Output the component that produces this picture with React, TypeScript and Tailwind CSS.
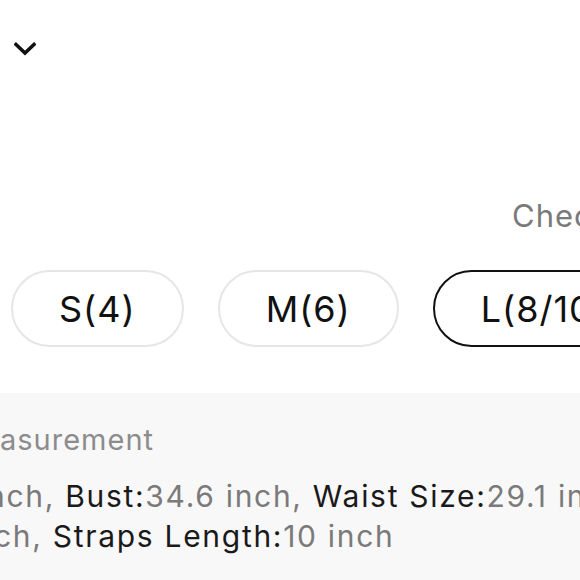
import React from 'react';

const sizes = [
  { label: 'S(4)', active: false },
  { label: 'M(6)', active: false },
  { label: 'L(8/10)', active: true },
];

export default function App() {
  return (
    <div
      className="w-[580px] h-[580px] overflow-hidden bg-white flex flex-col"
      style={{ fontFamily: 'Inter, "Noto Sans", sans-serif' }}
    >
      {/* collapse toggle */}
      <div className="pt-[42px] pl-[14px] h-[170px]">
        <svg width="22" height="14" viewBox="0 0 22 14" fill="none">
          <path d="M2 2.5 L11 11 L20 2.5" stroke="#111" strokeWidth="3.6" strokeLinecap="square" />
        </svg>
      </div>

      {/* size chart link */}
      <div className="flex pl-[512px] h-[100px] pt-[30px]">
        <span className="text-[31px] leading-none tracking-[1px] text-[#7a7a7a] whitespace-nowrap">Check Size Chart</span>
      </div>

      {/* size options */}
      <div className="flex gap-[34px] pl-[11px] h-[123px]">
        {sizes.map((s) => (
          <div
            key={s.label}
            className={`shrink-0 px-[46px] h-[77px] rounded-full flex items-center justify-center text-[36px] tracking-[1px] text-[#111] border-2 whitespace-nowrap ${
              s.active ? 'border-[#111]' : 'border-[#e6e6e6]'
            }`}
          >
            {s.label}
          </div>
        ))}
      </div>

      {/* measurement panel */}
      <div className="flex-1 bg-[#f8f8f8] pt-[32px] whitespace-nowrap">
        <div className="text-[29px] leading-none tracking-[1px] text-[#8c8c8c]">asurement</div>
        <div className="mt-[22px] text-[30px] leading-[40px] tracking-[1.7px] text-[#7a7a7a]">
          <div className="-ml-[13px]">
            nch, <span className="text-[#1a1a1a]">Bust:</span>34.6 inch, <span className="text-[#1a1a1a]">Waist Size:</span>29.1 inch
          </div>
          <div className="-ml-[6px]">
            ch, <span className="text-[#1a1a1a]">Straps Length:</span>10 inch
          </div>
        </div>
      </div>
    </div>
  );
}
